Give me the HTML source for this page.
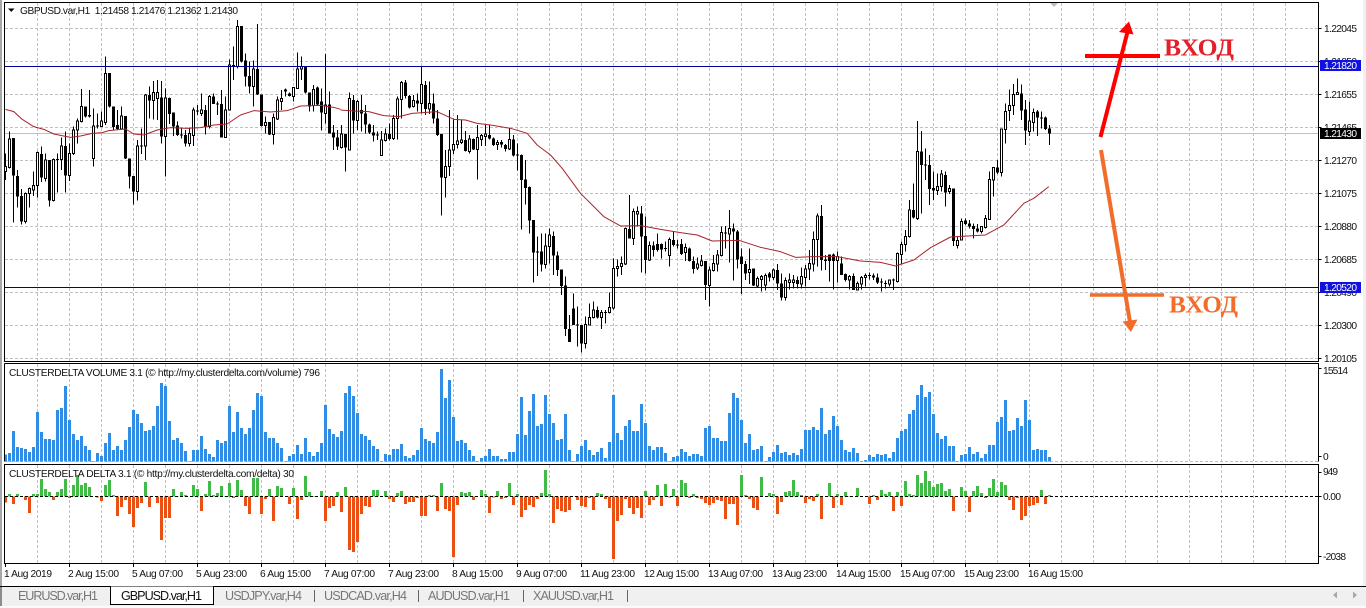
<!DOCTYPE html>
<html><head><meta charset="utf-8"><title>GBPUSD.var,H1</title>
<style>
html,body{margin:0;padding:0;background:#fff;width:1366px;height:608px;overflow:hidden}
svg{display:block}
text{font-family:"Liberation Sans",sans-serif;font-size:10.2px;fill:#111}
.w,.h,.b,.v,.gr,.or{shape-rendering:crispEdges}
.w{stroke:#000;stroke-width:3;fill:none}
.b{stroke:#000;stroke-width:9;fill:none}
.h{stroke:#000;stroke-width:3;fill:#fff}
.v{stroke:#2f8de6;stroke-width:9;fill:none}
.gr{stroke:#40bb45;stroke-width:9;fill:none}
.or{stroke:#ea5014;stroke-width:9;fill:none}
.ma{stroke:#a8232a;stroke-width:3;fill:none;stroke-linejoin:round}
.grid{stroke:#c0c0c0;stroke-width:1;stroke-dasharray:3 2;fill:none;shape-rendering:crispEdges}
.ax{stroke:#000;stroke-width:1;fill:none;shape-rendering:crispEdges}
.tab{font-size:12.6px;fill:#777}
.ent{font-family:"Liberation Serif",serif;font-weight:bold;font-size:24px}
</style></head><body>
<svg width="1366" height="608" viewBox="0 0 1366 608" xmlns="http://www.w3.org/2000/svg">
<rect width="1366" height="608" fill="#fff"/>
<rect x="0" y="0" width="2" height="586" fill="#a8a8a8"/>
<rect x="1363" y="0" width="3" height="586" fill="#f0f0f0"/>

<!-- grid -->
<path class="grid" d="M5 28.5H1318M5 61.5H1318M5 94.5H1318M5 127.5H1318M5 160.5H1318M5 193.5H1318M5 226.5H1318M5 259.5H1318M5 292.5H1318M5 325.5H1318M5 358.5H1318"/>
<path class="grid" d="M37.5 3V361M69.5 3V361M101.5 3V361M133.5 3V361M165.5 3V361M197.5 3V361M229.5 3V361M261.5 3V361M293.5 3V361M325.5 3V361M357.5 3V361M389.5 3V361M421.5 3V361M453.5 3V361M485.5 3V361M517.5 3V361M549.5 3V361M581.5 3V361M613.5 3V361M645.5 3V361M677.5 3V361M709.5 3V361M741.5 3V361M773.5 3V361M805.5 3V361M837.5 3V361M869.5 3V361M901.5 3V361M933.5 3V361M965.5 3V361M997.5 3V361M1029.5 3V361M1061.5 3V361M1093.5 3V361M1125.5 3V361M1157.5 3V361M1189.5 3V361M1221.5 3V361M1253.5 3V361M1285.5 3V361"/>
<path class="grid" d="M37.5 364V461M69.5 364V461M101.5 364V461M133.5 364V461M165.5 364V461M197.5 364V461M229.5 364V461M261.5 364V461M293.5 364V461M325.5 364V461M357.5 364V461M389.5 364V461M421.5 364V461M453.5 364V461M485.5 364V461M517.5 364V461M549.5 364V461M581.5 364V461M613.5 364V461M645.5 364V461M677.5 364V461M709.5 364V461M741.5 364V461M773.5 364V461M805.5 364V461M837.5 364V461M869.5 364V461M901.5 364V461M933.5 364V461M965.5 364V461M997.5 364V461M1029.5 364V461M1061.5 364V461M1093.5 364V461M1125.5 364V461M1157.5 364V461M1189.5 364V461M1221.5 364V461M1253.5 364V461M1285.5 364V461M5 461.5H1318"/>
<path class="grid" d="M37.5 465V563M69.5 465V563M101.5 465V563M133.5 465V563M165.5 465V563M197.5 465V563M229.5 465V563M261.5 465V563M293.5 465V563M325.5 465V563M357.5 465V563M389.5 465V563M421.5 465V563M453.5 465V563M485.5 465V563M517.5 465V563M549.5 465V563M581.5 465V563M613.5 465V563M645.5 465V563M677.5 465V563M709.5 465V563M741.5 465V563M773.5 465V563M805.5 465V563M837.5 465V563M869.5 465V563M901.5 465V563M933.5 465V563M965.5 465V563M997.5 465V563M1029.5 465V563M1061.5 465V563M1093.5 465V563M1125.5 465V563M1157.5 465V563M1189.5 465V563M1221.5 465V563M1253.5 465V563M1285.5 465V563"/>
<path d="M5 133.5H1318" stroke="#c0c0c0" fill="none" shape-rendering="crispEdges"/>

<!-- candles zone 1 -->
<g transform="translate(.5 0) scale(.33333)">
<path class="w" d="M15 460V540M27 395V505M39 414V668M51 510V623M63 567V673M75 578V670M87 562V623M99 515V588M111 455V593M123 440V546M135 460V545M147 480V620M159 475V605M171 460V578M183 412V510M195 395V578M207 430V543M219 380V465M231 355V430M243 267V367M255 319V352M267 270V352M279 325V500M291 340V385M303 335V381M315 170V375M327 219V322M339 319V392M351 330V390M363 320V390M375 348V477M387 475V566M399 528V614M411 420V602M423 385V462M435 282V480M447 260V356M459 243V358M471 240V360M483 243V430M495 265V530M507 292V372M519 337V408M531 365V408M543 385V415M555 390V440M567 382V440M579 323V438M591 315V345M603 280V348M615 315V403M627 285V385M639 280V312M651 305V345M663 270V413M675 290V414M687 178V332M699 140V240M711 60V205M723 78V187M735 160V260M747 185V280M759 182V320M771 72V285M783 283V380M795 350V400M807 366V405M819 340V433M831 290V360M843 270V330M855 265V290M867 278V290M879 263V305M891 157V267M903 170V240M915 200V280M927 277V335M939 255V335M951 260V316M963 265V392M975 162V370M987 275V400M999 375V450M1011 390V450"/>
<path class="b" d="M39 414V527M51 528V590M63 588V665M123 462V533M147 480V602M171 477V480M195 438V527M255 319V350M267 345V350M291 377V380M327 219V320M339 319V381M351 375V387M375 348V475M387 475V530M399 528V575M423 437V440M447 285V302M483 292V410M507 294V342M519 337V380M531 377V405M543 404V407M555 405V430M591 331V334M615 330V380M639 290V312M651 311V314M663 312V412M699 195V200M723 78V185M735 181V230M747 228V260M771 207V283M783 283V378M807 366V404M855 268V275M867 280V288M915 200V278M927 277V320M951 263V313M963 305V338M987 313V400M999 397V412M1011 412V440"/>
<path class="h" d="M12 500h6V515h-6zM24 417h6V503h-6zM72 580h6V665h-6zM84 565h6V580h-6zM96 556h6V570h-6zM108 458h6V557h-6zM132 480h6V535h-6zM156 478h6V602h-6zM180 438h6V478h-6zM204 460h6V527h-6zM216 390h6V460h-6zM228 363h6V390h-6zM240 320h6V365h-6zM276 378h6V475h-6zM300 363h6V380h-6zM312 220h6V367h-6zM360 348h6V387h-6zM408 438h6V575h-6zM432 285h6V438h-6zM456 277h6V302h-6zM468 277h6V295h-6zM492 294h6V410h-6zM564 400h6V430h-6zM576 330h6V406h-6zM600 330h6V340h-6zM624 290h6V380h-6zM672 330h6V412h-6zM684 195h6V330h-6zM708 80h6V200h-6zM756 207h6V260h-6zM792 367h6V376h-6zM816 352h6V403h-6zM828 300h6V357h-6zM840 295h6V305h-6zM876 263h6V290h-6zM888 207h6V266h-6zM900 200h6V207h-6zM936 268h6V316h-6zM972 315h6V340h-6z"/>
</g>
<!-- candles zone 2 -->
<g transform="translate(340.5 60) scale(.33333)">
<path class="w" d="M3 195V265M15 222V335M27 97V272M39 105V220M51 120V210M63 105V215M75 135V220M87 190V222M99 195V245M111 215V240M123 213V288M135 205V245M147 190V242M159 165V240M171 110V238M183 63V175M195 60V115M207 105V145M219 105V142M231 100V155M243 20V160M255 63V165M267 65V162M279 100V190M291 150V228M303 222V467M315 270V413M327 150V348M339 175V282M351 165V265M363 180V252M375 213V275M387 225V280M399 235V270M411 195V358M423 222V258M435 195V258M447 195V238M459 233V258M471 240V270M483 240V262M495 252V275M507 205V270M519 225V290M531 250V332M543 283V508M555 300V433M567 380V520M579 480V668M591 530V648M603 520V635M615 520V625M627 505V610M639 515V645M651 575V648M663 628V705M675 650V828M687 765V846M699 700V795M711 740V860M723 795V877M735 770V865M747 730V795M759 725V775M771 740V775M783 750V807M795 750V790M807 698V760M819 595V748M831 598V650M843 590V645M855 503V615M867 405V535M879 445V555M891 440V500M903 438V638M915 470V640M927 545V603M939 545V590M951 520V575M963 550V595M975 545V575M987 532V620M999 515V560M1011 540V565"/>
<path class="b" d="M15 222V262M39 120V182M63 150V160M75 160V193M87 193V218M99 218V227M111 224V227M147 222V237M195 67V108M207 108V142M231 122V130M255 75V147M279 130V175M291 175V225M303 222V352M375 240V273M399 237V268M447 225V235M459 235V255M483 246V254M495 255V267M519 238V287M531 283V287M543 285V360M555 358V384M567 381V482M579 480V578M591 574V577M603 575V614M639 528V587M651 587V630M663 628V678M675 677V807M687 807V846M699 745V795M711 794V797M723 795V850M771 750V773M795 756V759M867 507V535M903 460V530M915 528V600M939 556V570M951 552V570M963 552V568M975 564V567M999 540V555M1011 554V557"/>
<path class="h" d="M0 222h6V262h-6zM24 115h6V270h-6zM48 125h6V182h-6zM120 240h6V287h-6zM132 222h6V242h-6zM156 175h6V236h-6zM168 117h6V175h-6zM180 67h6V118h-6zM216 122h6V140h-6zM240 73h6V130h-6zM264 130h6V147h-6zM312 320h6V352h-6zM324 270h6V320h-6zM336 253h6V270h-6zM348 243h6V253h-6zM360 240h6V247h-6zM384 237h6V275h-6zM408 232h6V268h-6zM420 226h6V238h-6zM432 222h6V230h-6zM468 247h6V253h-6zM504 238h6V267h-6zM612 558h6V614h-6zM624 525h6V560h-6zM732 793h6V850h-6zM744 772h6V795h-6zM756 750h6V773h-6zM780 758h6V773h-6zM804 742h6V758h-6zM816 625h6V744h-6zM828 619h6V625h-6zM840 610h6V620h-6zM852 505h6V612h-6zM876 455h6V535h-6zM888 455h6V462h-6zM924 556h6V600h-6zM984 538h6V587h-6z"/>
</g>
<!-- candles zone 3 -->
<g transform="translate(680.5 60) scale(.33333)">
<path class="w" d="M3 537V585M15 550V603M27 563V605M39 590V640M51 592V630M63 585V620M75 603V720M87 620V740M99 585V635M111 570V635M123 500V590M135 498V565M147 450V607M159 490V662M171 510V625M183 565V702M195 603V660M207 565V672M219 625V678M231 650V683M243 645V695M255 640V692M267 636V665M279 625V660M291 612V690M303 640V722M315 652V722M327 640V688M339 645V686M351 650V686M363 622V685M375 615V680M387 570V660M399 515V635M411 460V620M423 435V632M435 585V630M447 583V665M459 580V688M471 575V668M483 590V645M495 640V665M507 645V688M519 640V690M531 665V692M543 648V688M555 640V680M567 638V658M579 640V660M591 640V672M603 656V695M615 662V686M627 658V680M639 655V690M651 578V668M663 545V610M675 510V575M687 420V532M699 370V475M711 183V480M723 213V460M735 265V360M747 285V435M759 335V420M771 340V405M783 330V395M795 335V440M807 375V402M819 385V558M831 530V565M843 475V541M855 475V495M867 480V505M879 490V535M891 492V518M903 498V520M915 465V505M927 335V480M939 322V410M951 300V342M963 205V350M975 130V250M987 88V183M999 72V165M1011 55V105M1023 73V180M1035 120V255M1047 125V228M1059 145V215M1071 150V228M1083 155V205M1095 170V210M1107 195V255"/>
<path class="b" d="M3 552V582M27 565V603M39 603V627M75 603V675M135 517V520M159 505V515M171 515V598M183 590V612M195 612V640M219 625V677M267 640V652M291 630V670M303 670V713M351 660V672M423 468V600M435 598V603M447 583V603M459 583V603M483 610V645M495 642V660M519 648V690M567 645V648M579 646V652M591 652V667M603 665V668M615 669V672M639 659V662M699 450V472M723 275V315M735 314V317M747 315V387M759 384V392M795 345V397M819 385V543M855 481V492M867 490V500M879 498V507M891 505V515M951 322V338M1023 100V152M1035 148V212M1071 155V173M1083 172V175M1095 172V207M1107 205V220"/>
<path class="h" d="M12 562h6V578h-6zM48 612h6V624h-6zM60 603h6V617h-6zM84 630h6V677h-6zM96 610h6V632h-6zM108 585h6V612h-6zM120 517h6V587h-6zM144 505h6V522h-6zM204 628h6V638h-6zM228 656h6V678h-6zM240 650h6V658h-6zM252 646h6V675h-6zM276 630h6V653h-6zM312 662h6V713h-6zM324 660h6V668h-6zM336 660h6V668h-6zM360 650h6V672h-6zM372 627h6V652h-6zM384 610h6V627h-6zM396 538h6V612h-6zM408 468h6V538h-6zM468 590h6V602h-6zM504 650h6V660h-6zM528 670h6V690h-6zM540 652h6V672h-6zM552 646h6V652h-6zM624 660h6V672h-6zM648 580h6V664h-6zM660 553h6V583h-6zM672 530h6V553h-6zM684 450h6V530h-6zM708 275h6V475h-6zM768 380h6V392h-6zM780 342h6V380h-6zM804 385h6V395h-6zM828 541h6V557h-6zM840 484h6V540h-6zM900 500h6V515h-6zM912 475h6V502h-6zM924 358h6V478h-6zM936 322h6V360h-6zM960 207h6V338h-6zM972 155h6V208h-6zM984 136h6V152h-6zM996 103h6V137h-6zM1008 98h6V103h-6zM1044 183h6V215h-6zM1056 157h6V187h-6z"/>
</g>

<!-- moving average -->
<g transform="translate(.5 0) scale(.33333)"><path class="ma" d="M15 328L40 335L65 358L100 380L130 388L160 402L210 412L240 408L275 400L305 398L325 392L375 387L400 402L430 405L470 390L510 383L560 385L600 383L640 375L680 372L720 345L760 332L810 336L860 332L900 318L960 316L1000 322L1020 328"/></g>
<g transform="translate(340.5 60) scale(.33333)"><path class="ma" d="M0 150L40 153L85 155L130 167L175 170L215 160L290 155L340 178L375 180L410 190L450 195L510 205L560 220L590 255L630 285L665 325L720 400L790 470L840 498L900 497L960 508L1020 518"/></g>
<g transform="translate(680.5 60) scale(.33333)"><path class="ma" d="M0 518L50 525L95 543L175 541L240 562L300 575L345 592L400 590L470 590L540 603L600 607L645 618L700 600L750 563L810 531L915 525L970 495L1030 430L1060 415L1105 380"/></g>

<!-- horizontal levels -->
<path d="M5 66.5H1318M5 287.5H1318" stroke="#000099" fill="none" shape-rendering="crispEdges"/>

<!-- volume -->
<g transform="translate(.5 360) scale(.33333)"><path class="v" d="M15 305V283M27 305V279M39 305V213M51 305V261M63 305V264M75 305V267M87 305V276M99 305V261M111 305V156M123 305V216M135 305V237M147 305V237M159 305V240M171 305V150M183 305V144M195 305V78M207 305V180M219 305V222M231 305V240M243 305V228M255 305V258M267 305V270M279 305V303M291 305V279M303 305V288M315 305V249M327 305V219M339 305V270M351 305V258M363 305V270M375 305V240M387 305V201M399 305V150M411 305V162M423 305V189M435 305V213M447 305V210M459 305V198M471 305V138M483 305V69M495 305V78M507 305V183M519 305V240M531 305V234M543 305V249M555 305V273M567 305V303M579 305V270M591 305V270M603 305V228M615 305V267M627 305V282M639 305V291M651 305V240M663 305V249M675 305V243M687 305V138M699 305V216M711 305V156M723 305V204M735 305V222M747 305V204M759 305V150M771 305V99M783 305V108M795 305V216M807 305V234M819 305V234M831 305V249M843 305V264M855 305V303M867 305V288M879 305V282M891 305V255M903 305V282M915 305V234M927 305V276M939 305V288M951 305V276M963 305V249M975 305V135M987 305V207M999 305V222M1011 305V231"/></g>
<g transform="translate(340.5 360) scale(.33333)"><path class="v" d="M3 305V213M15 305V99M27 305V78M39 305V108M51 305V159M63 305V222M75 305V228M87 305V240M99 305V258M111 305V267M123 305V303M135 305V282M147 305V285M159 305V267M171 305V267M183 305V252M195 305V288M207 305V294M219 305V285M231 305V270M243 305V204M255 305V237M267 305V243M279 305V249M291 305V216M303 305V27M315 305V114M327 305V60M339 305V171M351 305V243M363 305V240M375 305V249M387 305V270M399 305V288M411 305V303M423 305V294M435 305V288M447 305V267M459 305V288M471 305V288M483 305V297M495 305V297M507 305V276M519 305V276M531 305V222M543 305V111M555 305V225M567 305V153M579 305V102M591 305V198M603 305V192M615 305V105M627 305V162M639 305V189M651 305V240M663 305V237M675 305V162M687 305V270M699 305V303M711 305V282M723 305V258M735 305V240M747 305V270M759 305V285M771 305V276M783 305V264M795 305V294M807 305V246M819 305V105M831 305V219M843 305V240M855 305V198M867 305V180M879 305V213M891 305V213M903 305V132M915 305V189M927 305V258M939 305V270M951 305V261M963 305V261M975 305V279M987 305V303M999 305V291M1011 305V288"/></g>
<g transform="translate(680.5 360) scale(.33333)"><path class="v" d="M3 305V267M15 305V276M27 305V288M39 305V282M51 305V282M63 305V288M75 305V204M87 305V198M99 305V234M111 305V234M123 305V243M135 305V243M147 305V159M159 305V99M171 305V114M183 305V180M195 305V249M207 305V222M219 305V270M231 305V267M243 305V258M255 305V303M267 305V291M279 305V276M291 305V255M303 305V279M315 305V276M327 305V285M339 305V279M351 305V285M363 305V267M375 305V210M387 305V210M399 305V201M411 305V210M423 305V144M435 305V222M447 305V210M459 305V168M471 305V198M483 305V240M495 305V270M507 305V276M519 305V264M531 305V279M543 305V303M555 305V300M567 305V285M579 305V291M591 305V282M603 305V285M615 305V282M627 305V294M639 305V276M651 305V234M663 305V213M675 305V207M687 305V162M699 305V150M711 305V105M723 305V75M735 305V111M747 305V96M759 305V162M771 305V219M783 305V237M795 305V228M807 305V258M819 305V258M831 305V303M843 305V285M855 305V282M867 305V261M879 305V282M891 305V276M903 305V294M915 305V282M927 305V255M939 305V255M951 305V186M963 305V171M975 305V120M987 305V213M999 305V210M1011 305V174M1023 305V198M1035 305V120M1047 305V180M1059 305V270M1071 305V267M1083 305V270M1095 305V270M1107 305V291"/></g>

<!-- delta -->
<g transform="translate(.5 360) scale(.33333)">
<path class="gr" d="M27 410V402M51 410V402M63 410V408M99 410V402M111 410V402M123 410V357M135 410V387M147 410V396M171 410V396M183 410V387M195 410V357M219 410V375M231 410V345M243 410V375M255 410V369M267 410V381M315 410V375M327 410V360M339 410V405M435 410V366M519 410V387M531 410V408M543 410V396M555 410V405M579 410V375M591 410V387M615 410V402M627 410V363M639 410V405M651 410V399M663 410V378M675 410V408M687 410V369M711 410V360M723 410V390M759 410V354M771 410V354M807 410V387M831 410V378M843 410V384M879 410V384M915 410V348M927 410V396M939 410V408M963 410V393M1011 410V396"/>
<path class="or" d="M15 410V428M39 410V432M75 410V420M87 410V459M159 410V420M207 410V414M291 410V412M303 410V423M351 410V468M363 410V441M375 410V420M387 410V462M399 410V501M411 410V444M423 410V429M447 410V441M471 410V429M483 410V540M495 410V474M507 410V474M603 410V453M699 410V414M735 410V438M747 410V462M783 410V462M795 410V417M819 410V483M867 410V432M891 410V477M903 410V420M975 410V483M987 410V444M999 410V438"/>
</g>
<g transform="translate(340.5 360) scale(.33333)">
<path class="gr" d="M15 410V381M99 410V390M111 410V390M135 410V393M171 410V399M183 410V393M267 410V405M279 410V405M303 410V369M363 410V396M375 410V399M387 410V396M423 410V390M435 410V402M471 410V393M507 410V369M531 410V402M603 410V399M615 410V330M627 410V402M771 410V399M783 410V402M915 410V393M951 410V375M975 410V372M999 410V387"/>
<path class="or" d="M3 410V456M27 410V570M39 410V576M51 410V546M63 410V462M75 410V438M87 410V441M147 410V417M159 410V426M195 410V432M207 410V426M219 410V426M231 410V414M243 410V468M255 410V468M291 410V453M315 410V447M327 410V453M339 410V591M351 410V435M399 410V420M447 410V459M459 410V413M483 410V417M495 410V414M519 410V435M543 410V471M555 410V450M567 410V435M579 410V441M591 410V417M639 410V489M651 410V447M663 410V453M675 410V456M687 410V450M711 410V420M723 410V438M735 410V441M747 410V414M759 410V450M795 410V417M807 410V444M819 410V597M831 410V483M843 410V465M855 410V417M867 410V444M879 410V462M891 410V444M903 410V474M927 410V435M939 410V420M963 410V438M987 410V413M1011 410V438"/>
</g>
<g transform="translate(680.5 360) scale(.33333)">
<path class="gr" d="M3 410V360M15 410V369M39 410V402M183 410V345M195 410V405M243 410V351M267 410V399M279 410V402M315 410V396M327 410V393M339 410V360M351 410V396M363 410V405M411 410V402M447 410V369M471 410V402M495 410V396M507 410V408M531 410V384M579 410V405M603 410V390M615 410V402M627 410V396M651 410V396M675 410V363M687 410V402M699 410V405M711 410V345M723 410V369M735 410V333M747 410V363M759 410V381M771 410V372M783 410V369M795 410V393M807 410V387M843 410V381M855 410V393M879 410V393M891 410V378M903 410V399M927 410V384M939 410V357M951 410V396M963 410V366M975 410V375M1083 410V390M1107 410V405"/>
<path class="or" d="M27 410V414M51 410V414M63 410V417M75 410V429M87 410V435M99 410V429M111 410V420M123 410V423M135 410V477M147 410V432M159 410V432M171 410V495M207 410V417M219 410V444M231 410V450M291 410V462M303 410V426M375 410V429M387 410V417M399 410V423M423 410V477M459 410V444M483 410V435M567 410V432M591 410V420M639 410V453M663 410V438M819 410V453M867 410V456M915 410V414M987 410V420M999 410V450M1011 410V414M1023 410V480M1035 410V468M1047 410V438M1059 410V435M1071 410V429M1095 410V432"/>
</g>
<path d="M5 496.5H1318" stroke="#000" stroke-dasharray="3 2" fill="none" shape-rendering="crispEdges"/>

<!-- frames -->
<path class="ax" d="M4.5 2.5H1318.5V361.5H4.5ZM4.5 363.5H1318.5V461.5M4.5 363.5V461.5M4.5 464.5H1318.5V563.5H4.5Z"/>
<path class="ax" d="M1318.5 28.5h3M1318.5 61.5h3M1318.5 94.5h3M1318.5 127.5h3M1318.5 160.5h3M1318.5 193.5h3M1318.5 226.5h3M1318.5 259.5h3M1318.5 292.5h3M1318.5 325.5h3M1318.5 358.5h3M1318.5 368.5h3M1318.5 456.5h3M1318.5 472.5h3M1318.5 496.5h3M1318.5 556.5h3"/>
<path class="ax" d="M5.5 564v3M69.5 564v3M133.5 564v3M197.5 564v3M261.5 564v3M325.5 564v3M389.5 564v3M453.5 564v3M517.5 564v3M581.5 564v3M645.5 564v3M709.5 564v3M773.5 564v3M837.5 564v3M901.5 564v3M965.5 564v3M1029.5 564v3"/>

<!-- chart title -->
<path d="M8 8.5h6.5l-3.2 3.4z" fill="#000"/>
<text x="20" y="14" textLength="218">GBPUSD.var,H1&#160;&#160;1.21458 1.21476 1.21362 1.21430</text>
<path d="M1050 3h8l-4 4z" fill="#bdbdbd"/>
<text x="9" y="376" textLength="311">CLUSTERDELTA VOLUME 3.1 (© http://my.clusterdelta.com/volume) 796</text>
<text x="9" y="477" textLength="285">CLUSTERDELTA DELTA 3.1 (© http://my.clusterdelta.com/delta) 30</text>

<!-- price axis -->
<text x="1324" y="32" textLength="33">1.22045</text>
<text x="1324" y="65" textLength="33">1.21850</text>
<text x="1324" y="98" textLength="33">1.21655</text>
<text x="1324" y="131" textLength="33">1.21465</text>
<text x="1324" y="164" textLength="33">1.21270</text>
<text x="1324" y="197" textLength="33">1.21075</text>
<text x="1324" y="230" textLength="33">1.20880</text>
<text x="1324" y="263" textLength="33">1.20685</text>
<text x="1324" y="296" textLength="33">1.20490</text>
<text x="1324" y="329" textLength="33">1.20300</text>
<text x="1324" y="362" textLength="33">1.20105</text>
<rect x="1320" y="60" width="41" height="11" fill="#1111e0"/>
<text x="1324" y="69" textLength="33" style="fill:#fff">1.21820</text>
<rect x="1320" y="128" width="41" height="11" fill="#000"/>
<text x="1324" y="137" textLength="33" style="fill:#fff">1.21430</text>
<rect x="1320" y="282" width="41" height="11" fill="#1111e0"/>
<text x="1324" y="291" textLength="33" style="fill:#fff">1.20520</text>
<text x="1323" y="374" textLength="25">15514</text>
<text x="1323" y="460">0</text>
<text x="1323" y="475" textLength="15">949</text>
<text x="1323" y="500" textLength="18">0.00</text>
<text x="1323" y="560" textLength="23">-2038</text>

<!-- time axis -->
<text x="4" y="577" textLength="48">1 Aug 2019</text>
<text x="68" y="577" textLength="51">2 Aug 15:00</text>
<text x="132" y="577" textLength="51">5 Aug 07:00</text>
<text x="196" y="577" textLength="51">5 Aug 23:00</text>
<text x="260" y="577" textLength="51">6 Aug 15:00</text>
<text x="324" y="577" textLength="51">7 Aug 07:00</text>
<text x="388" y="577" textLength="51">7 Aug 23:00</text>
<text x="452" y="577" textLength="51">8 Aug 15:00</text>
<text x="516" y="577" textLength="51">9 Aug 07:00</text>
<text x="580" y="577" textLength="55">11 Aug 23:00</text>
<text x="644" y="577" textLength="55">12 Aug 15:00</text>
<text x="708" y="577" textLength="55">13 Aug 07:00</text>
<text x="772" y="577" textLength="55">13 Aug 23:00</text>
<text x="836" y="577" textLength="55">14 Aug 15:00</text>
<text x="900" y="577" textLength="55">15 Aug 07:00</text>
<text x="964" y="577" textLength="55">15 Aug 23:00</text>
<text x="1028" y="577" textLength="55">16 Aug 15:00</text>

<!-- arrows -->
<g fill="none">
<path d="M1085 56H1160" stroke="#f00" stroke-width="4"/>
<path d="M1100.5 137L1128 30" stroke="#f00" stroke-width="4"/>
<path d="M1129 21.5L1119 32L1133.5 34.5Z" fill="#f00"/>
<path d="M1090 295H1164" stroke="#f26c2a" stroke-width="3.5"/>
<path d="M1101 150L1130 322" stroke="#f26c2a" stroke-width="4"/>
<path d="M1122.5 321.5L1137.5 319.5L1131 332Z" fill="#f26c2a"/>
</g>
<text class="ent" x="1164" y="55.5" textLength="70" lengthAdjust="spacingAndGlyphs" style="fill:#e3202a">ВХОД</text>
<text class="ent" x="1169" y="312.5" textLength="69" lengthAdjust="spacingAndGlyphs" style="fill:#f26c2a">ВХОД</text>

<!-- tab bar -->
<rect x="0" y="586" width="1366" height="20" fill="#f0f0f0"/>
<rect x="0" y="606" width="1366" height="2" fill="#fbfbfb"/>
<path class="ax" d="M0 586.5H1366"/>
<rect x="0" y="587" width="2" height="19" fill="#8c8c8c"/>
<path d="M110.5 586.5V604.5H213.5V586.5" fill="#fff" stroke="#000" shape-rendering="crispEdges"/>
<text class="tab" x="18" y="600" textLength="80">EURUSD.var,H1</text>
<text class="tab" x="121" y="600" textLength="81" style="fill:#111">GBPUSD.var,H1</text>
<text class="tab" x="225" y="600" textLength="77">USDJPY.var,H4</text>
<text class="tab" x="324" y="600" textLength="83">USDCAD.var,H4</text>
<text class="tab" x="428" y="600" textLength="82">AUDUSD.var,H1</text>
<text class="tab" x="533" y="600" textLength="81">XAUUSD.var,H1</text>
<path d="M314.5 590V602M418.5 590V602M523.5 590V602M627.5 590V602" stroke="#666" fill="none" shape-rendering="crispEdges"/>
<path d="M1337 591.5v7l-4-3.5zM1353 591.5v7l4-3.5z" fill="#a8a8a8"/>
</svg>
</body></html>
